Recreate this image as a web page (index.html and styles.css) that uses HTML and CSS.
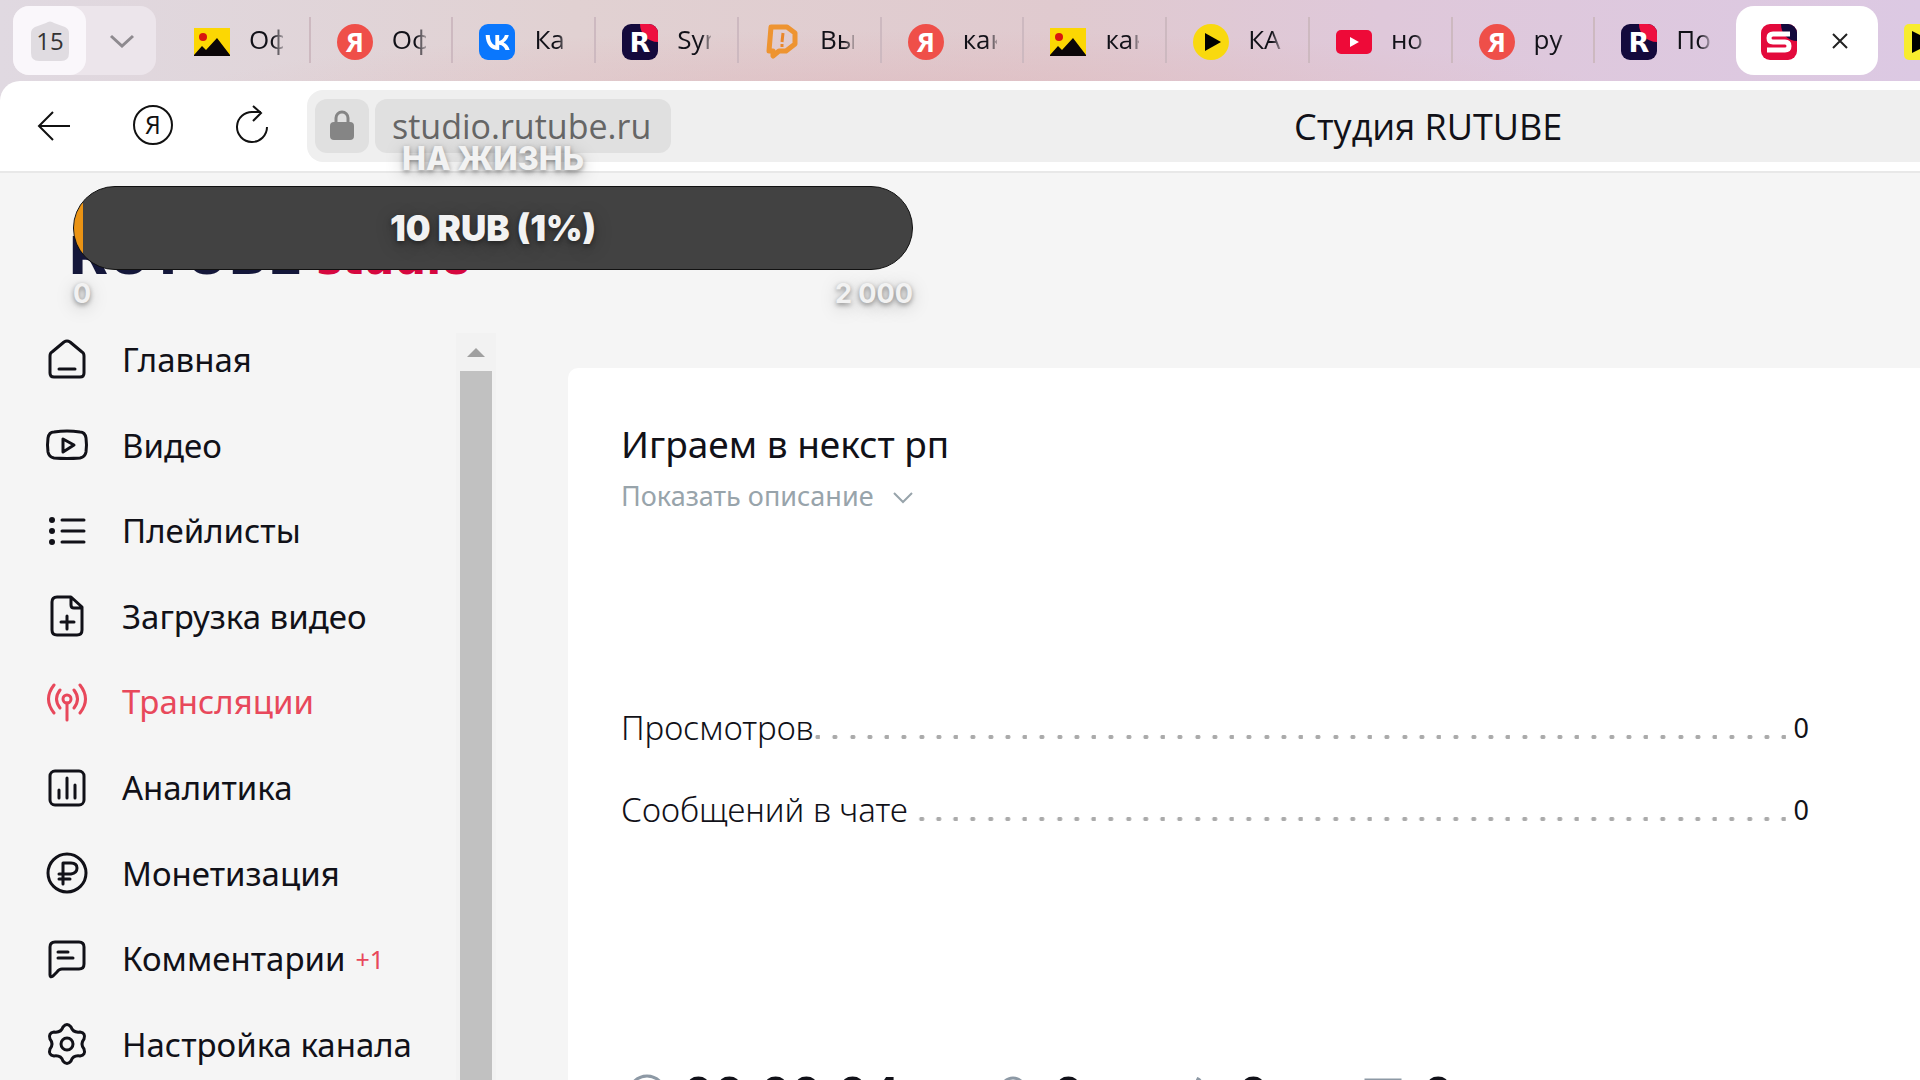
FILE: index.html
```html
<!DOCTYPE html>
<html lang="ru">
<head>
<meta charset="utf-8">
<title>Студия RUTUBE</title>
<link rel="stylesheet" href="styles.css">
</head>
<body>
<svg class="sprite" aria-hidden="true">
  <symbol id="fav-picture" viewBox="0 0 36 36"><path fill="#fcd703" d="M0 4h36v28H0z"/><circle cx="9" cy="13" r="4" fill="#d8150f"/><path fill="#0b0608" d="M0 31l8-9 4 4L23 14l13 17v1H0z"/></symbol>
  <symbol id="fav-ya" viewBox="0 0 36 36"><circle cx="18" cy="18" r="18" fill="#ef4f49"/><text x="18" y="28" class="fav-letter ya-letter">Я</text></symbol>
  <symbol id="fav-vk" viewBox="0 0 36 36"><rect width="36" height="36" rx="9" fill="#0a77fd"/><path fill="#fff" transform="translate(0 0) scale(1.5)" d="M13.16 17.4c-5.47 0-8.59-3.75-8.72-9.99h2.74c.09 4.58 2.11 6.52 3.71 6.92V7.41h2.58v3.95c1.58-.17 3.24-1.97 3.8-3.95h2.58a7.62 7.62 0 0 1-3.51 4.98 7.9 7.9 0 0 1 4.11 5.02h-2.84a4.94 4.94 0 0 0-4.14-3.57v3.57z"/></symbol>
  <symbol id="fav-rutube" viewBox="0 0 36 36"><rect width="36" height="36" rx="9" fill="#140a3c"/><path fill="#ee1040" d="M18 0h9a9 9 0 0 1 9 9v9C26 18 18 10 18 0z"/><text x="18" y="28" class="fav-letter">R</text></symbol>
  <symbol id="fav-studio" viewBox="0 0 36 36"><rect width="36" height="36" rx="9" fill="#e30a3c"/><path fill="#140a3c" d="M20 0h7a9 9 0 0 1 9 9v8C27 17 20 10 20 0z"/><path fill="none" stroke="#fff" stroke-width="5" stroke-linejoin="round" d="M29 10H12q-4 0-4 4t4 4h12q4 0 4 4t-4 4H6"/></symbol>
  <symbol id="fav-donate" viewBox="0 0 36 36"><path fill="none" stroke="#ee9431" stroke-width="5" stroke-linejoin="round" d="M6 3h16l8 6v11l-9 7h-7l-6 5v-5H4z"/><path stroke="#e9872b" stroke-width="3" d="M18 9l-1 9M17 20v3"/></symbol>
  <symbol id="fav-play" viewBox="0 0 36 36"><circle cx="18" cy="18" r="18" fill="#f9d90e"/><path d="M12 9l16 9-16 9z"/></symbol>
  <symbol id="fav-tube" viewBox="0 0 36 36"><rect y="6" width="36" height="24" rx="5" fill="#ee0a38"/><path fill="#fff" d="M14 13l9 5-9 5z"/></symbol>
  <symbol id="fav-square" viewBox="0 0 36 36"><rect width="36" height="36" rx="5" fill="#f8ec2d"/><path d="M8 7l22 11L8 29z"/></symbol>
</svg>

<header class="browser">
  <div class="tabstrip">
    <div class="group">
      <button class="group-count" type="button"><svg width="38" height="40" viewBox="0 0 38 40"><path fill="#e0dce1" d="M15 2q4-3 8 0l11 4q4 2 4 6v20q0 8-8 8H8q-8 0-8-8V12q0-4 4-6z"/><text x="19" y="29" class="count">15</text></svg></button>
      <button class="group-more" type="button" aria-label="Список вкладок"><svg width="26" height="14" viewBox="0 0 26 14"><path d="M2 2l11 10L24 2" fill="none" stroke="#8e8a8f" stroke-width="3"/></svg></button>
    </div>
    <nav class="tabs">
      <button class="tab" type="button"><svg class="fav"><use href="#fav-picture"/></svg><span>Оф</span></button>
      <button class="tab" type="button"><svg class="fav"><use href="#fav-ya"/></svg><span>Оф</span></button>
      <button class="tab" type="button"><svg class="fav"><use href="#fav-vk"/></svg><span>Ка</span></button>
      <button class="tab" type="button"><svg class="fav"><use href="#fav-rutube"/></svg><span>Syn</span></button>
      <button class="tab" type="button"><svg class="fav"><use href="#fav-donate"/></svg><span>Вы</span></button>
      <button class="tab" type="button"><svg class="fav"><use href="#fav-ya"/></svg><span>как</span></button>
      <button class="tab" type="button"><svg class="fav"><use href="#fav-picture"/></svg><span>как</span></button>
      <button class="tab" type="button"><svg class="fav"><use href="#fav-play"/></svg><span>КА</span></button>
      <button class="tab" type="button"><svg class="fav"><use href="#fav-tube"/></svg><span>но</span></button>
      <button class="tab" type="button"><svg class="fav"><use href="#fav-ya"/></svg><span>ру</span></button>
      <button class="tab" type="button"><svg class="fav"><use href="#fav-rutube"/></svg><span>По</span></button>
    </nav>
    <div class="tab-active"><svg class="fav"><use href="#fav-studio"/></svg><button class="close" type="button" aria-label="Закрыть"><svg width="18" height="18" viewBox="0 0 18 18"><path d="M2 2l14 14M16 2L2 16" stroke="#222" stroke-width="2"/></svg></button></div>
    <button class="tab tab-cut" type="button" aria-label="Вкладка"><svg class="fav"><use href="#fav-square"/></svg></button>
  </div>
  <div class="toolbar">
    <button class="tool" type="button" aria-label="Назад"><svg width="40" height="40" viewBox="0 0 40 40"><path d="M36 20H5M19 6L5 20l14 14" fill="none" stroke="#111" stroke-width="2"/></svg></button>
    <button class="tool" type="button" aria-label="Яндекс"><svg width="40" height="40" viewBox="0 0 40 40"><circle cx="20" cy="19" r="19" fill="none" stroke="#111" stroke-width="2"/><text x="20" y="28" class="ya-outline">Я</text></svg></button>
    <button class="tool" type="button" aria-label="Обновить"><svg width="40" height="40" viewBox="0 0 40 40"><path d="M35 21a15 15 0 1 1-14-15h8M21 0l8 7-8 8" fill="none" stroke="#111" stroke-width="2"/></svg></button>
    <div class="address">
      <button class="lock" type="button" aria-label="Сведения о сайте"><svg width="24" height="32" viewBox="0 0 24 32"><path d="M6 14V8a6 6 0 0 1 12 0v6" fill="none" stroke="#858585" stroke-width="3"/><rect y="12" width="24" height="18" rx="4" fill="#858585"/></svg></button>
      <input class="url" type="text" value="studio.rutube.ru" aria-label="Адрес" readonly>
      <span class="page-title">Студия RUTUBE</span>
    </div>
  </div>
</header>

<div class="page">
  <aside class="side">
    <a class="logo" href="#"><span>RUTUBE</span><span class="logo-studio">studio</span></a>
    <div class="side-body">
      <nav class="menu">
        <a href="#"><svg class="ico" viewBox="0 0 48 48"><path d="M7 20q0-3 2-4L21 6q3-2 6 0l12 10q2 1 2 4v17q0 4-4 4H11q-4 0-4-4zM16 33h16"/></svg>Главная</a>
        <a href="#"><svg class="ico" viewBox="0 0 48 48"><path d="M11 11Q24 9 37 11q5 0 6 6 1 7 0 14-1 5-6 6-13 1-26 0-5-1-6-6-1-7 0-14 1-6 6-6z"/><path d="M20 18v13l11-7z"/></svg>Видео</a>
        <a href="#"><svg class="ico" viewBox="0 0 48 48"><path d="M19 13h22M19 24h22M19 35h22"/><g fill="currentColor" stroke="none"><circle cx="9" cy="13" r="3"/><circle cx="9" cy="24" r="3"/><circle cx="9" cy="35" r="3"/></g></svg>Плейлисты</a>
        <a href="#"><svg class="ico" viewBox="0 0 48 48"><path d="M14 5h14l11 10v23q0 5-5 5H14q-5 0-5-5V10q0-5 5-5zM28 6v7q0 3 3 3h8M24 24v13M18 30h13"/></svg>Загрузка видео</a>
        <a class="current" href="#"><svg class="ico" viewBox="0 0 48 48"><circle cx="24" cy="21" r="4"/><path d="M24 25v17M17 12q-7 9 0 18M31 12q7 9 0 18M11 7q-11 14 0 28M37 7q11 14 0 28"/></svg>Трансляции</a>
        <a href="#"><svg class="ico" viewBox="0 0 48 48"><rect x="7" y="7" width="34" height="34" rx="5"/><path d="M16 26v8M24 14v20M32 21v13"/></svg>Аналитика</a>
        <a href="#"><svg class="ico" viewBox="0 0 48 48"><circle cx="24" cy="24" r="19"/><path d="M20 35V14h8q6 0 6 5t-6 6H16M16 30h11"/></svg>Монетизация</a>
        <a href="#"><svg class="ico" viewBox="0 0 48 48"><path d="M12 7h24q5 0 5 5v17q0 5-5 5H19q-3 0-5 3l-4 4q-3 2-3-1V12q0-5 5-5zM15 17h10M15 23h15"/></svg>Комментарии <span class="badge">+1</span></a>
        <a href="#"><svg class="ico" viewBox="0 0 48 48"><path d="M20 7q4-5 8 0 2 6 9 5 6 1 4 7-4 5 0 10 2 6-4 7-7-1-9 5-4 5-8 0-2-6-9-5-6-1-4-7 4-5 0-10-2-6 4-7 7 1 9-5z"/><circle cx="24" cy="24" r="6"/></svg>Настройка канала</a>
      </nav>
      <div class="scroll"><span class="scroll-up"></span><span class="thumb"></span></div>
    </div>
  </aside>
  <main class="card">
    <h1>Играем в некст рп</h1>
    <button class="more" type="button">Показать описание<svg width="22" height="14" viewBox="0 0 22 14"><path d="M2 2l9 9 9-9" fill="none" stroke="currentColor" stroke-width="2"/></svg></button>
    <dl class="stats">
      <div><dt>Просмотров</dt><dd>0</dd></div>
      <div><dt>Сообщений в чате</dt><dd>0</dd></div>
    </dl>
    <div class="totals">
      <span><svg viewBox="0 0 44 44"><circle cx="26" cy="21" r="18"/><path d="M26 12v10l7 5"/></svg>00:00:04</span>
      <span><svg viewBox="0 0 44 44"><circle cx="22" cy="17" r="12"/><path d="M6 42q2-14 16-14t16 14"/></svg>0</span>
      <span><svg viewBox="0 0 44 44"><path d="M14 22l8-16q5 2 2 13h12l-4 20H14zM6 22h8v17H6z"/></svg>0</span>
      <span><svg viewBox="0 0 44 44"><path d="M5 7h34v26H18l-8 7v-7H5z"/></svg>0</span>
    </div>
  </main>
</div>

<section class="goal">
  <h2>НА ЖИЗНЬ</h2>
  <div class="goal-bar"><span class="goal-fill"></span><strong>10 RUB (1%)</strong></div>
  <div class="goal-range"><span>0</span><span>2 000</span></div>
</section>
</body>
</html>
```
FILE: styles.css
```css
* { box-sizing: border-box; }

body {
  margin: 0;
  height: 100vh;
  overflow: hidden;
  display: flex;
  flex-direction: column;
  background: #f5f5f5;
  color: #111118;
  font-family: "Noto Sans", "Open Sans", sans-serif;
}

button {
  border: 0;
  padding: 0;
  background: none;
  color: inherit;
  font: inherit;
}

a { color: inherit; text-decoration: none; }
h1, h2, dl, dd { margin: 0; }
.sprite { position: absolute; width: 0; height: 0; }

/* Browser chrome */
.browser {
  flex: none;
  background:
    radial-gradient(ellipse 700px 60px at 900px 90px, #dfb9be99, transparent),
    linear-gradient(90deg, #e0d9e1, #e1d1d2 30%, #e0cacf 55%, #dfc8da 72%, #dcc9e3);
}

.tabstrip { display: flex; height: 81px; padding: 6px 0 6px 13px; overflow: hidden; }
.group { flex: none; display: flex; width: 143px; margin-right: 12px; border-radius: 16px; background: #ece5eb; }
.group-count { display: flex; align-items: center; justify-content: center; width: 73px; border-radius: 16px; background: #faf7fb; }
.count { fill: #333; font: 24px "Open Sans", sans-serif; text-anchor: middle; }
.group-more { flex: 1; display: flex; align-items: center; padding-left: 23px; }

.tabs { flex: 1; display: flex; }
.tab {
  flex: 1 1 0;
  display: flex;
  align-items: center;
  gap: 19px;
  height: 46px;
  margin-top: 11px;
  padding-left: 26px;
  border-right: 2px solid #cdb9c0;
  font: 26px/34px "Open Sans", sans-serif;
  text-align: left;
}
.tab:last-child { border-right: 0; }
.tab span {
  width: 34px;
  margin-top: -3px;
  overflow: hidden;
  white-space: nowrap;
  -webkit-mask-image: linear-gradient(90deg, #000 70%, #0004);
  mask-image: linear-gradient(90deg, #000 70%, #0004);
}
.fav { flex: none; width: 36px; height: 36px; margin-top: 3px; }
.fav-letter { fill: #fff; font: bold 27px "DejaVu Sans", sans-serif; text-anchor: middle; }
.ya-letter { font: bold 27px "Open Sans", sans-serif; }
.tab-active {
  flex: none;
  display: flex;
  align-items: center;
  gap: 34px;
  width: 142px;
  padding-left: 25px;
  border-radius: 18px;
  background: #fff;
}
.close { display: flex; }
.tab-cut { flex: none; width: 42px; overflow: hidden; }

.toolbar {
  display: flex;
  align-items: center;
  height: 92px;
  padding: 9px 0 9px 34px;
  gap: 59px;
  border-bottom: 2px solid #e8e8e8;
  border-top-left-radius: 20px;
  background: #fff;
}
.tool { display: flex; }
.tool svg { overflow: visible; }
.ya-outline { fill: #111; font: 25px "Open Sans", sans-serif; text-anchor: middle; }
.address {
  flex: 1;
  display: flex;
  align-items: center;
  gap: 6px;
  height: 72px;
  margin-left: -24px;
  padding-left: 8px;
  border-radius: 16px 0 0 16px;
  background: #efefef;
}
.lock { display: flex; align-items: center; justify-content: center; width: 54px; height: 54px; border-radius: 12px; background: #e0e0e0; }
.url {
  width: 296px;
  height: 54px;
  padding: 0 0 0 17px;
  border: 0;
  border-radius: 12px;
  background: #e0e0e0;
  color: #666;
  font: 34px "Open Sans", sans-serif;
}
.page-title { padding-left: 617px; font: 36px "Open Sans", sans-serif; white-space: nowrap; }

/* Studio page */
.page { flex: 1; min-height: 0; display: flex; }
.side { flex: none; display: flex; flex-direction: column; width: 568px; }
.logo {
  flex: none;
  display: flex;
  align-items: baseline;
  gap: 13px;
  height: 144px;
  padding: 53px 0 0 68px;
  color: #14173a;
  font: bold 52px "DejaVu Sans", sans-serif;
}
.logo-studio { color: #d6073f; font-size: 44px; }
.side-body { flex: none; display: flex; }
.menu { flex: 1; display: grid; grid-template-rows: repeat(9, 1fr); height: 770px; }
.menu a { display: flex; align-items: center; gap: 31px; padding-left: 43px; font-size: 33px; white-space: nowrap; }
.menu .current { color: #e8485b; }
.ico { flex: none; width: 48px; height: 48px; fill: none; stroke: currentColor; stroke-width: 3; stroke-linecap: round; stroke-linejoin: round; }
.badge { margin-left: -21px; color: #e8485b; font-size: 25px; }
.scroll { display: flex; flex-direction: column; align-items: center; width: 40px; margin: 16px 72px 0 0; background: #f2f2f2; }
.scroll-up { height: 38px; padding-top: 15px; }
.scroll-up::before { content: ""; display: block; border: 9px solid transparent; border-top: 0; border-bottom-color: #a0a0a0; }
.thumb { flex: 1; width: 32px; background: #c1c1c1; }

.card { flex: 1; min-width: 0; margin-top: 195px; padding: 52px 111px 0 53px; border-top-left-radius: 10px; background: #fff; }
h1 { font-size: 37px; font-weight: 400; line-height: 48px; }
.more { display: flex; align-items: center; gap: 18px; margin-top: 10px; color: #98a4ab; font-size: 27px; line-height: 36px; }
.more svg { margin-top: 4px; }
.stats { margin-top: 172px; }
.stats div { display: flex; align-items: center; height: 82px; }
.stats dt { display: flex; flex: 1; align-items: center; font-size: 33px; font-weight: 300; }
.stats dt::after {
  content: "";
  flex: 1;
  height: 4px;
  margin-top: 20px;
  margin-right: 8px;
  background:
    radial-gradient(circle at 67px 2px, #aaa 2px, transparent 3px) right / 69px 4px,
    radial-gradient(circle at 50px 2px, #aaa 2px, transparent 3px) right / 69px 4px,
    radial-gradient(circle at 33px 2px, #aaa 2px, transparent 3px) right / 69px 4px,
    radial-gradient(circle at 15px 2px, #aaa 2px, transparent 3px) right / 69px 4px;
}
.stats dd { font-size: 27px; }
.totals { display: flex; margin-top: 215px; gap: 92px; font: bold 54px/60px "Open Sans", sans-serif; }
.totals span { display: flex; align-items: center; gap: 18px; }
.totals svg { width: 44px; height: 44px; fill: none; stroke: #8d99a5; stroke-width: 3; }

/* Donation goal laid over the page */
.goal {
  position: absolute;
  top: 140px;
  left: 73px;
  width: 840px;
  color: #f2f2f2;
  font-family: Inter, sans-serif;
  text-shadow: 0 2px 5px #0006, 0 4px 18px #0004;
}
.goal h2 { height: 46px; font-size: 32px; font-weight: 800; line-height: 38px; text-align: center; }
.goal-bar {
  display: flex;
  align-items: center;
  justify-content: center;
  position: relative;
  height: 84px;
  border: 1px solid #111;
  border-radius: 42px;
  overflow: hidden;
  background: #424242;
  font-size: 35px;
}
.goal-bar strong { font-weight: 900; }
.goal-fill { position: absolute; inset: 0 auto 0 0; width: 9px; background: #ea9314; }
.goal-range { display: flex; justify-content: space-between; font-size: 27px; font-weight: 700; line-height: 48px; }
```
